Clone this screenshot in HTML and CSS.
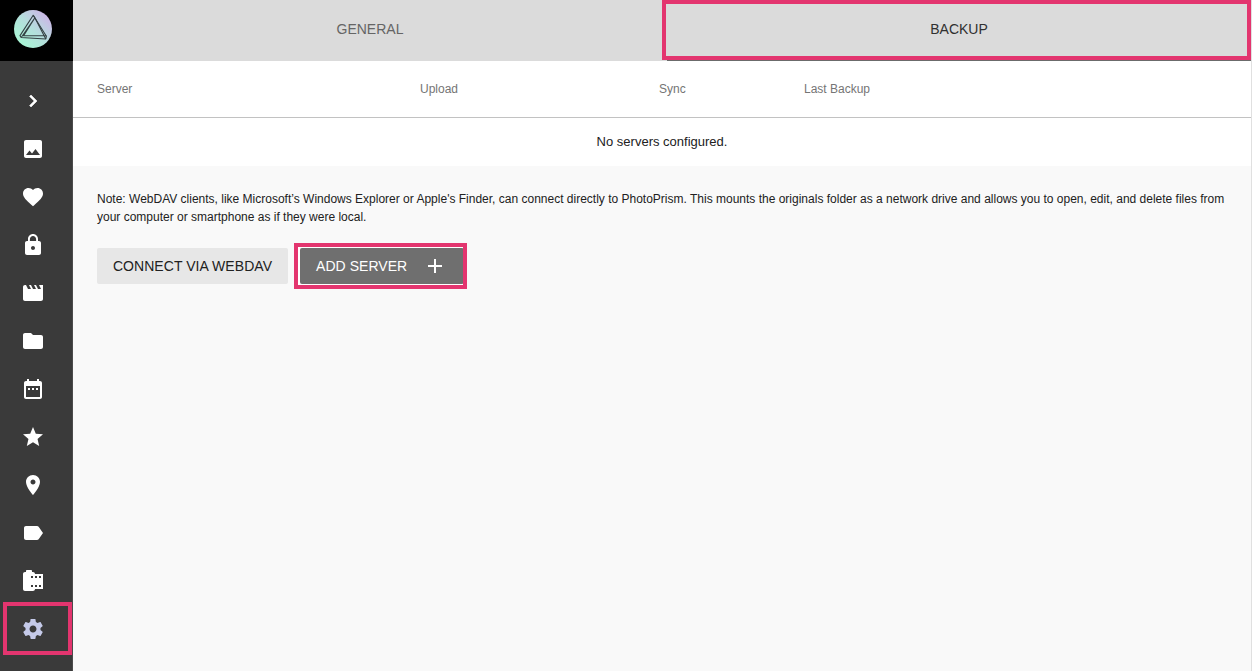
FILE: index.html
```html
<!DOCTYPE html>
<html lang="en">
<head>
<meta charset="utf-8">
<title>PhotoPrism Settings</title>
<link rel="stylesheet" href="styles.css">
</head>
<body>
<div class="app">
  <aside class="sidebar">
    <div class="brand">
      <svg class="logo" viewBox="0 0 38 38">
        <defs><linearGradient id="orb" x1="0.15" y1="0.85" x2="0.85" y2="0.15"><stop offset="0" stop-color="#a9f5d5"/><stop offset=".5" stop-color="#b4dfdc"/><stop offset="1" stop-color="#cbb9e6"/></linearGradient></defs>
        <circle cx="19" cy="19" r="19" fill="url(#orb)"/>
        <g fill="none" stroke="#344144" stroke-width="1.1" stroke-linejoin="round">
          <path d="M19.200 5.300 6 25.600 7.200 27.500 31.800 29 32.400 26.200Z"/>
          <path d="M19.200 5.300 20.900 7.800 9.600 25.700H32.400M7.200 27.500 20.900 7.800 31.800 29"/>
        </g>
      </svg>
    </div>
    <nav class="nav">
      <a class="item"><svg class="chevron" viewBox="0 0 24 24"><path d="M10 6 8.590 7.410 13.170 12l-4.580 4.590L10 18l6-6z"/></svg></a>
      <a class="item"><svg viewBox="0 0 24 24"><path d="M21 19V5c0-1.100-.9-2-2-2H5c-1.100 0-2 .9-2 2v14c0 1.100.9 2 2 2h14c1.100 0 2-.9 2-2zM8.500 13.500l2.500 3.010L14.500 12l4.500 6H5l3.500-4.500z"/></svg></a>
      <a class="item"><svg viewBox="0 0 24 24"><path d="M12 21.350l-1.450-1.320C5.400 15.360 2 12.280 2 8.500 2 5.420 4.420 3 7.500 3c1.740 0 3.410.81 4.500 2.090C13.090 3.810 14.760 3 16.500 3 19.580 3 22 5.420 22 8.500c0 3.780-3.400 6.860-8.550 11.540L12 21.350z"/></svg></a>
      <a class="item"><svg viewBox="0 0 24 24"><path d="M18 8h-1V6c0-2.760-2.240-5-5-5S7 3.240 7 6v2H6c-1.100 0-2 .9-2 2v10c0 1.100.9 2 2 2h12c1.100 0 2-.9 2-2V10c0-1.100-.9-2-2-2zm-6 9c-1.100 0-2-.9-2-2s.9-2 2-2 2 .9 2 2-.9 2-2 2zm3.100-9H8.900V6c0-1.710 1.390-3.100 3.100-3.100 1.710 0 3.100 1.390 3.100 3.100v2z"/></svg></a>
      <a class="item"><svg viewBox="0 0 24 24"><path d="M18 4l2 4h-3l-2-4h-2l2 4h-3l-2-4H8l2 4H7L5 4H4c-1.100 0-1.990.9-1.990 2L2 18c0 1.100.9 2 2 2h16c1.100 0 2-.9 2-2V4h-4z"/></svg></a>
      <a class="item"><svg viewBox="0 0 24 24"><path d="M10 4H4c-1.100 0-1.990.9-1.990 2L2 18c0 1.100.9 2 2 2h16c1.100 0 2-.9 2-2V8c0-1.100-.9-2-2-2h-8l-2-2z"/></svg></a>
      <a class="item"><svg viewBox="0 0 24 24"><path d="M9 11H7v2h2v-2zm4 0h-2v2h2v-2zm4 0h-2v2h2v-2zm2-7h-1V2h-2v2H8V2H6v2H5c-1.110 0-1.990.9-1.990 2L3 20c0 1.100.89 2 2 2h14c1.100 0 2-.9 2-2V6c0-1.100-.9-2-2-2zm0 16H5V9h14v11z"/></svg></a>
      <a class="item"><svg viewBox="0 0 24 24"><path d="M12 17.270 18.180 21l-1.640-7.030L22 9.240l-7.190-.61L12 2 9.190 8.630 2 9.240l5.460 4.730L5.820 21z"/></svg></a>
      <a class="item"><svg viewBox="0 0 24 24"><path d="M12 2C8.130 2 5 5.130 5 9c0 5.250 7 13 7 13s7-7.750 7-13c0-3.870-3.130-7-7-7zm0 9.500c-1.380 0-2.500-1.120-2.500-2.500s1.120-2.500 2.500-2.500 2.500 1.120 2.500 2.500-1.120 2.500-2.500 2.500z"/></svg></a>
      <a class="item"><svg viewBox="0 0 24 24"><path d="M17.630 5.840C17.270 5.330 16.670 5 16 5L5 5.010C3.900 5.010 3 5.900 3 7v10c0 1.100.9 1.990 2 1.990L16 19c.67 0 1.270-.33 1.630-.84L22 12l-4.370-6.160z"/></svg></a>
      <a class="item"><svg viewBox="0 0 24 24"><path d="M14 5c0-1.100-.9-2-2-2h-1V2c0-.55-.45-1-1-1H6c-.55 0-1 .45-1 1v1H4c-1.100 0-2 .9-2 2v15c0 1.100.9 2 2 2h8c1.100 0 2-.9 2-2h8V5h-8zm-2 13h-2v-2h2v2zm0-9h-2V7h2v2zm4 9h-2v-2h2v2zm0-9h-2V7h2v2zm4 9h-2v-2h2v2zm0-9h-2V7h2v2z"/></svg></a>
      <a class="item active"><svg viewBox="0 0 24 24"><path d="M19.430 12.980c.04-.32.07-.64.07-.98s-.03-.66-.07-.98l2.110-1.650c.19-.15.24-.42.12-.64l-2-3.460c-.12-.22-.39-.3-.61-.22l-2.490 1c-.52-.4-1.080-.73-1.690-.98l-.38-2.650C14.460 2.180 14.250 2 14 2h-4c-.25 0-.46.18-.49.42l-.38 2.650c-.61.25-1.170.59-1.690.98l-2.490-1c-.23-.09-.49 0-.61.22l-2 3.460c-.13.22-.07.49.12.64l2.110 1.650c-.04.32-.07.65-.07.98s.03.66.07.98l-2.110 1.650c-.19.15-.24.42-.12.64l2 3.460c.12.22.39.3.61.22l2.490-1c.52.4 1.080.73 1.690.98l.38 2.650c.03.24.24.42.49.42h4c.25 0 .46-.18.49-.42l.38-2.650c.61-.25 1.170-.59 1.690-.98l2.490 1c.23.09.49 0 .61-.22l2-3.460c.12-.22.07-.49-.12-.64l-2.110-1.650zM12 15.500c-1.930 0-3.500-1.570-3.500-3.500s1.570-3.500 3.500-3.500 3.500 1.570 3.500 3.500-1.570 3.500-3.500 3.500z"/></svg></a>
    </nav>
  </aside>
  <main class="main">
    <div class="tabs">
      <div class="tab"><span>GENERAL</span></div>
      <div class="tab selected"><span>BACKUP</span></div>
    </div>
    <div class="table">
      <div class="head"><span>Server</span><span>Upload</span><span>Sync</span><span>Last Backup</span></div>
      <div class="empty"><span>No servers configured.</span></div>
    </div>
    <div class="content">
      <p class="note"><span>Note: WebDAV clients, like Microsoft’s Windows Explorer or Apple's Finder, can connect directly to PhotoPrism. This mounts the originals folder as a network drive and allows you to open, edit, and delete files from</span><br><span>your computer or smartphone as if they were local.</span></p>
      <div class="actions">
        <button class="btn">CONNECT VIA WEBDAV</button>
        <button class="btn primary"><span>ADD SERVER</span><svg viewBox="0 0 24 24"><path d="M19 13h-6v6h-2v-6H5v-2h6V5h2v6h6z"/></svg></button>
      </div>
    </div>
  </main>
</div>
</body>
</html>
```
FILE: styles.css
```css
*, *::before, *::after { box-sizing: border-box; }
body { margin: 0; font-family: "Liberation Sans", Arial, sans-serif; color: #212121; background: #fafafa; }
svg { display: block; fill: currentColor; }
.app { display: flex; width: 1252px; height: 671px; overflow: hidden; }
.sidebar { width: 73px; flex: none; background: #3a3a3a; border-right: 1px solid #4b4b4b; }
.brand { width: 73px; height: 61px; background: #000; padding: 10px 0 0 14px; }
.logo { width: 38px; height: 38px; }
.nav { display: flex; flex-direction: column; padding-top: 16px; color: #fff; }
.item { position: relative; height: 48px; padding: 12px 0 0 21px; }
.item svg { width: 24px; height: 24px; }
.item .chevron { stroke: currentColor; stroke-width: .6; }
.active { color: #c5cae9; }
.active::after { content: ""; position: absolute; left: 3px; top: -3px; width: 69px; height: 53px; border: 4px solid #e3356f; }
.main { flex: 1; border-right: 1px solid #e0e0e0; background: #f9f9f9; }
.tabs { display: flex; height: 61px; background: #dbdbdb; font-size: 14px; color: #656565; }
.tab { flex: 1; display: flex; justify-content: center; padding: 21px 0 0 5px; line-height: 16px; position: relative; }
.selected { color: #303030; background: linear-gradient(#6b6b6b, #6b6b6b) 5px 60px / 584px 1px no-repeat; }
.selected::after { content: ""; position: absolute; inset: 0 0 1px; border: 4px solid #e3356f; }
.table { background: #fff; }
.head { display: grid; grid-template-columns: 323px 239px 145px 1fr; align-items: center; height: 57px; padding-left: 24px; border-bottom: 1px solid #c2c2c2; font-size: 12px; color: #757575; }
.empty { display: flex; align-items: center; justify-content: center; height: 48px; padding-bottom: 2px; font-size: 13px; }
.content { padding: 24px; }
.note { margin: 0; font-size: 12px; line-height: 18px; white-space: nowrap; }
.actions { display: flex; gap: 12px; margin-top: 22px; }
.btn { width: 191px; height: 36px; padding: 0; border: 0; border-radius: 2px; background: #e7e7e7; color: #212121; font: 14px "Liberation Sans", Arial, sans-serif; letter-spacing: .05px; white-space: nowrap; }
.primary { position: relative; display: flex; align-items: center; justify-content: space-between; width: 164px; padding: 0 17px 0 16px; background: #6f6f6f; color: #fff; }
.primary svg { width: 24px; height: 24px; }
.primary::before { content: ""; position: absolute; left: -2px; top: -1px; width: 165px; height: 38px; border: solid #fff; border-width: 1px 0 1px 2px; }
.primary::after { content: ""; position: absolute; left: -6px; top: -5px; width: 173px; height: 46px; border: 4px solid #e3356f; }
```
